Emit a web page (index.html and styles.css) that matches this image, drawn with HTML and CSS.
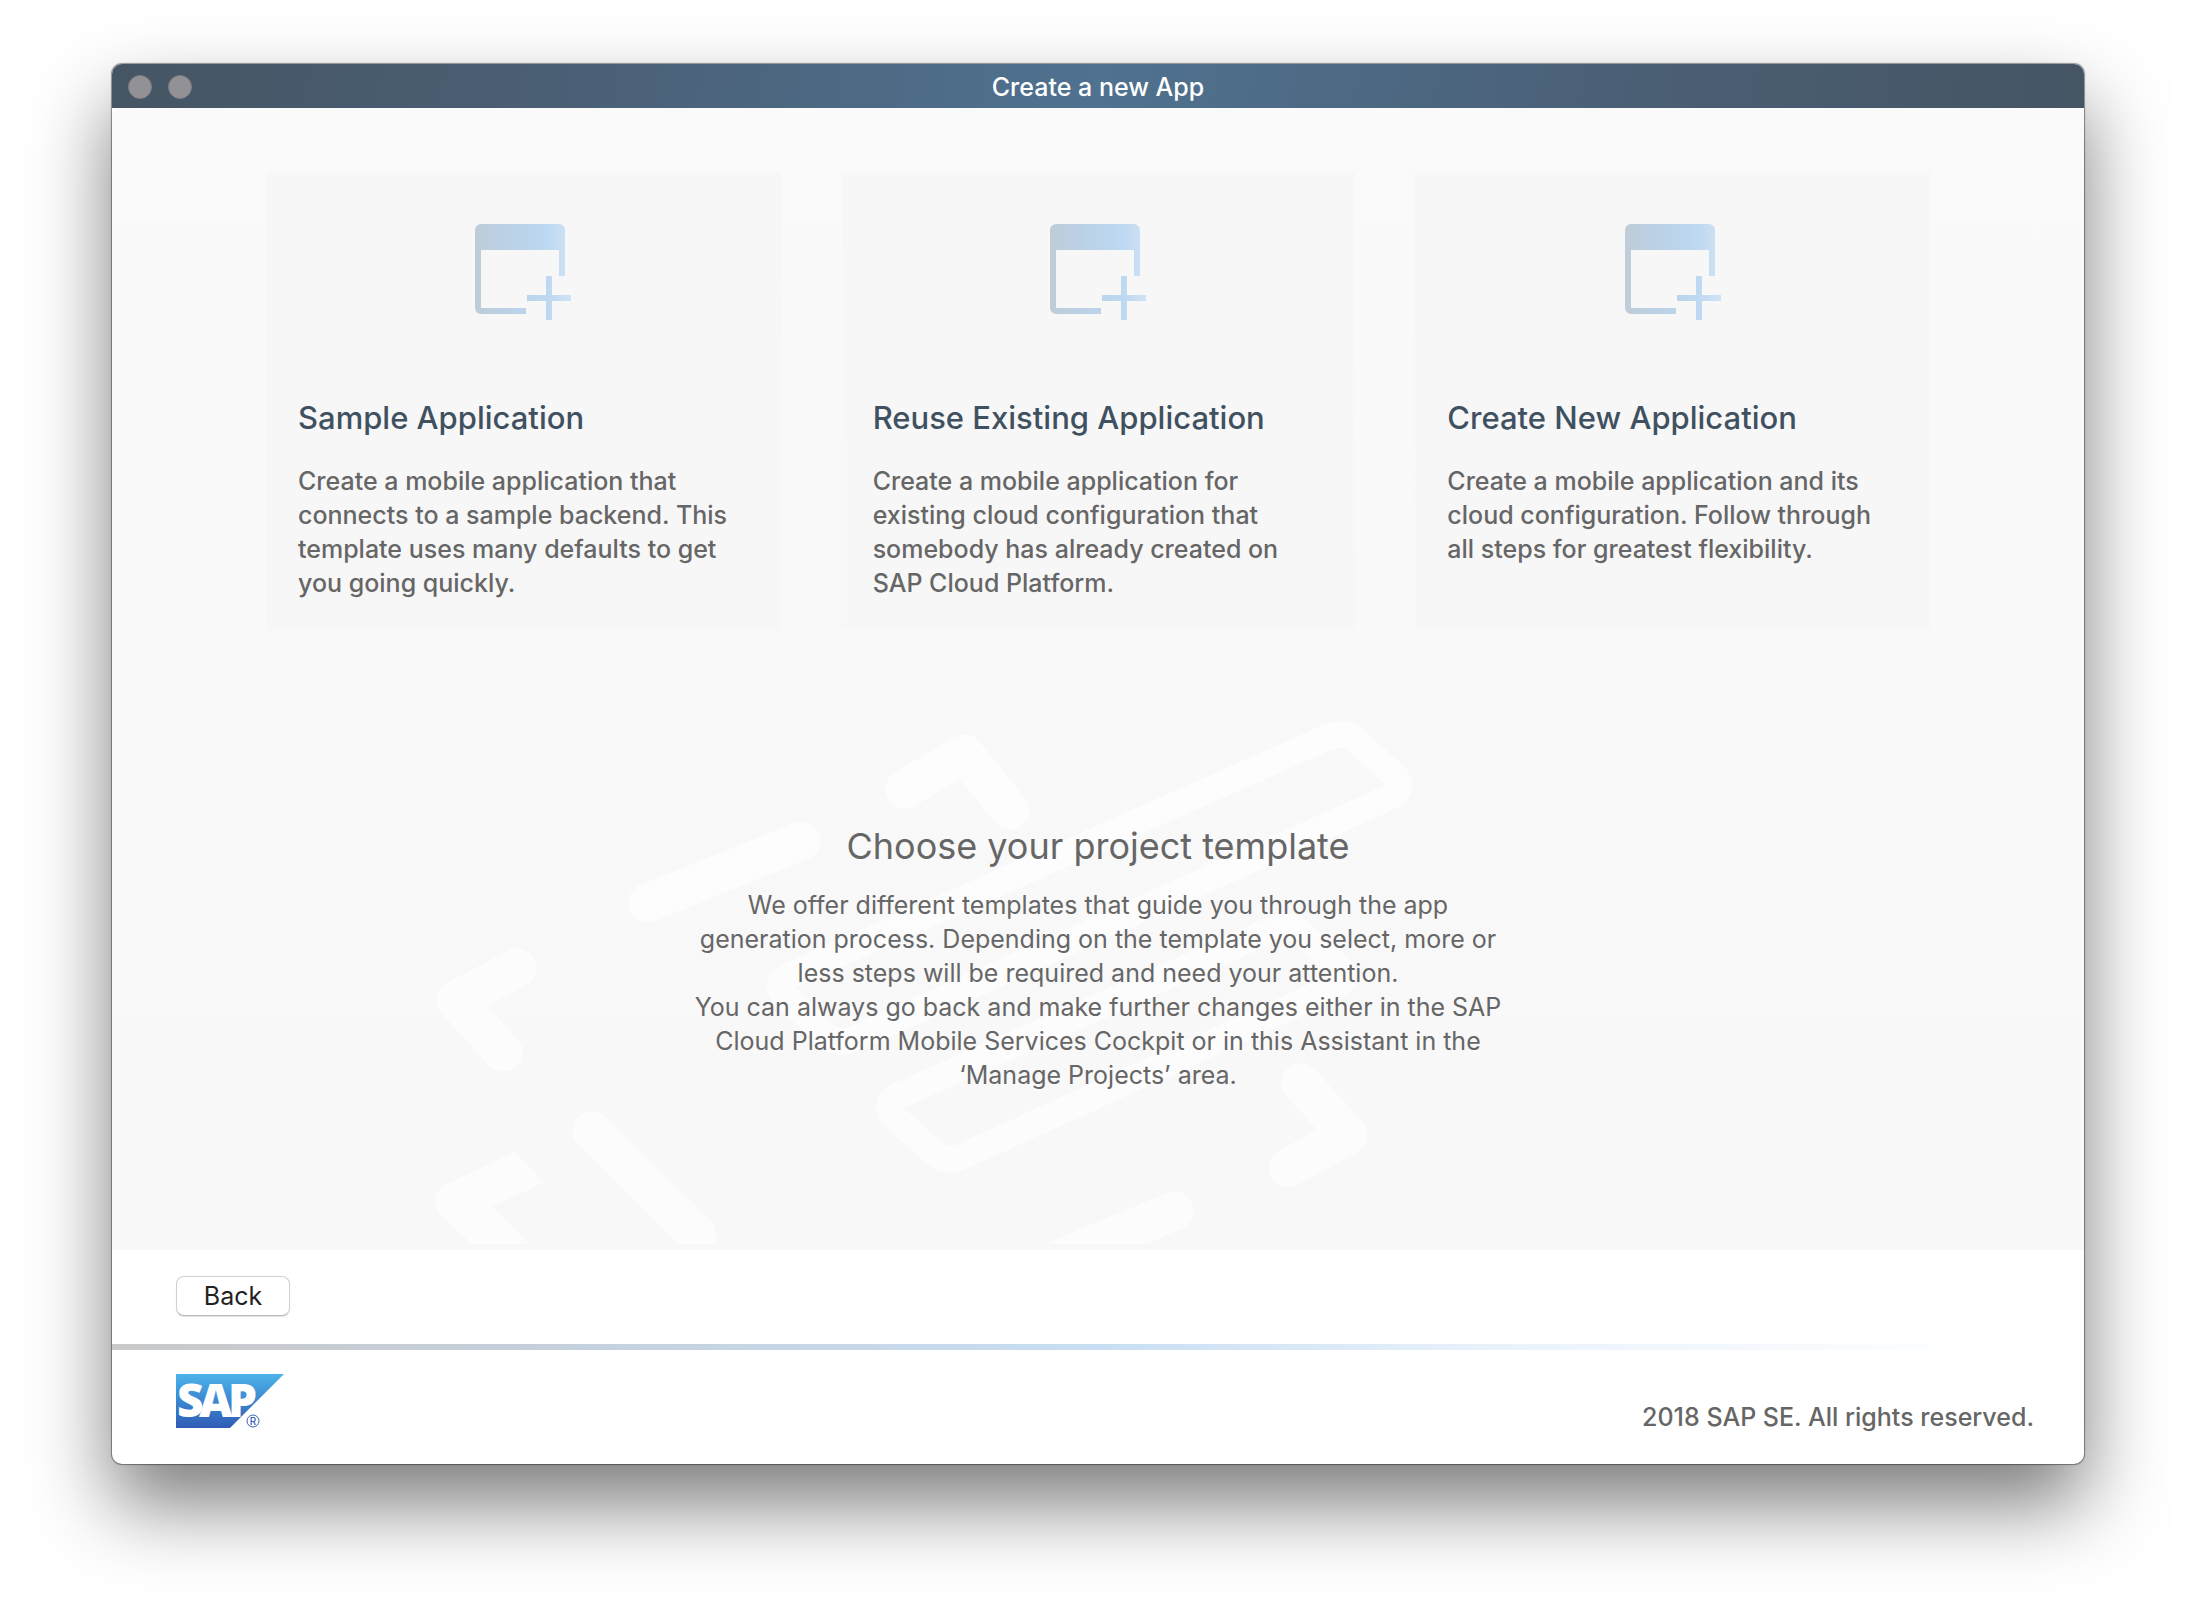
FILE: index.html
```html
<!DOCTYPE html>
<html lang="en">
<head>
  <meta charset="utf-8">
  <meta name="viewport" content="width=device-width, initial-scale=1">
  <title>Create a new App</title>
  <link rel="stylesheet" href="styles.css">
</head>
<body>
  <!-- Shared icon and its gradient -->
  <svg class="defs" aria-hidden="true">
    <defs>
      <linearGradient id="icon-fill" gradientUnits="userSpaceOnUse" x1="0" y1="0" x2="96" y2="0">
        <stop offset="0" stop-color="#bfccd8"/>
        <stop offset="0.35" stop-color="#bbd1e6"/>
        <stop offset="0.75" stop-color="#bdd8f1"/>
        <stop offset="1" stop-color="#d0e3f5"/>
      </linearGradient>
      <symbol id="icon-new-app" viewBox="0 0 96 96">
        <path fill="url(#icon-fill)" d="M6 0H84a6 6 0 0 1 6 6V52H84V26H6V84H51V90H6a6 6 0 0 1-6-6V6a6 6 0 0 1 6-6ZM71 52h6v19h19v6H77v19h-6V77H52v-6h19Z"/>
      </symbol>
    </defs>
  </svg>

  <div class="window">
    <header class="titlebar">
      <div class="controls">
        <span class="control"></span>
        <span class="control"></span>
      </div>
      <h1 class="title">Create a new App</h1>
    </header>

    <div class="panel">
      <main class="content">
        <svg class="watermark" viewBox="430 714 1000 530" width="1000" height="530" fill="none" stroke="#fff" stroke-linecap="round" stroke-linejoin="round" aria-hidden="true">
          <g stroke-width="39">
            <path d="M648 903 801 841"/>
            <path d="M517 968 456 1000 503 1052"/>
            <path d="M592 1131 697 1235"/>
            <path d="M905 789 964 754 1010 810"/>
            <path d="M1301 1083 1348 1135 1288 1168"/>
            <path d="M1174 1211 1006 1281"/>
          </g>
          <path stroke="none" fill="#fff" d="M515 1152 544 1182 492 1207 529 1244H472L442 1217A20 20 0 0 1 449 1183Z"/>
          <g stroke-width="26">
            <path d="M1326 738Q1345 730 1357 741L1395 776Q1406 789 1390 797L854 1039Q838 1046 826 1035L785 996Q773 984 789 976Z"/>
            <path d="M1271 930Q1289 922 1301 933L1340 968Q1350 980 1332 988L963 1156Q945 1164 933 1152L893 1116Q882 1103 900 1095Z"/>
          </g>
        </svg>

        <section class="cards" aria-label="Project templates">
          <article class="card">
            <svg class="card-icon" aria-hidden="true"><use href="#icon-new-app"/></svg>
            <h2 class="card-title">Sample Application</h2>
            <p class="card-text">Create a mobile application that connects to a sample backend. This template uses many defaults to get you going quickly.</p>
          </article>
          <article class="card">
            <svg class="card-icon" aria-hidden="true"><use href="#icon-new-app"/></svg>
            <h2 class="card-title">Reuse Existing Application</h2>
            <p class="card-text">Create a mobile application for existing cloud configuration that somebody has already created on SAP Cloud Platform.</p>
          </article>
          <article class="card">
            <svg class="card-icon" aria-hidden="true"><use href="#icon-new-app"/></svg>
            <h2 class="card-title">Create New Application</h2>
            <p class="card-text">Create a mobile application and its cloud configuration. Follow through all steps for greatest flexibility.</p>
          </article>
        </section>

        <section class="intro">
          <h2 class="intro-title">Choose your project template</h2>
          <p class="intro-text">We offer different templates that guide you through the app generation process. Depending on the template you select, more or less steps will be required and need your attention.<br>You can always go back and make further changes either in the SAP Cloud Platform Mobile Services Cockpit or in this Assistant in the ‘Manage Projects’ area.</p>
        </section>
      </main>

      <div class="actions">
        <button class="back" type="button">Back</button>
      </div>
    </div>

    <footer class="footer">
      <svg class="logo" viewBox="0 0 108 54" width="108" height="54" role="img" aria-label="SAP">
        <defs>
          <linearGradient id="logo-fill" x1="0" y1="0" x2="0" y2="1">
            <stop offset="0" stop-color="#4db3ea"/>
            <stop offset="0.5" stop-color="#3b87d0"/>
            <stop offset="1" stop-color="#2f5bb5"/>
          </linearGradient>
        </defs>
        <path fill="url(#logo-fill)" d="M0 0H108L54 54H0Z"/>
        <text class="logo-name" x="1 23 52" y="43">SAP</text>
        <circle cx="77" cy="47" r="6" fill="none" stroke="#3a62b8"/>
        <text class="logo-mark" x="77" y="51">R</text>
      </svg>
      <p class="copyright">2018 SAP SE. All rights reserved.</p>
    </footer>
  </div>
</body>
</html>
```
FILE: styles.css
```css
* {
  box-sizing: border-box;
}

body {
  margin: 0;
  padding: 64px 112px 160px;
  background: #fff;
  color: #666;
  font: 400 25px/34px Inter, "Liberation Sans", sans-serif;
}

h1,
h2,
p {
  margin: 0;
}

.defs {
  position: absolute;
  width: 0;
  height: 0;
}

/* Window frame */
.window {
  display: flex;
  flex-direction: column;
  min-height: calc(100vh - 224px);
  border-radius: 10px;
  background: #fff;
  box-shadow: 0 0 1px 1px rgba(0, 0, 0, 0.4), 0 40px 80px rgba(0, 0, 0, 0.52);
  overflow: hidden;
}

.titlebar {
  display: grid;
  grid-template-columns: 1fr auto 1fr;
  align-items: center;
  height: 44px;
  padding: 2px 16px 0;
  background: linear-gradient(100deg, #455564, #4a5d72 20%, #4f7290 50%, #4a5d72 80%, #455564);
}

.controls {
  display: flex;
  gap: 16px;
}

.control {
  width: 24px;
  height: 24px;
  border: 1px solid #7d7c82;
  border-radius: 50%;
  background: #929196;
}

.title {
  color: #fff;
  font-size: 25px;
  font-weight: 500;
}

.panel {
  display: flex;
  flex: 1;
  flex-direction: column;
  border-radius: 8px;
  overflow: hidden;
}

/* Template choice */
.content {
  position: relative;
  flex: 1;
  padding: 64px 154px;
  background: linear-gradient(#fafafa, #f8f8f8);
}

.watermark {
  position: absolute;
  bottom: 6px;
  left: calc(50% - 668px);
  opacity: 0.7;
}

.cards {
  position: relative;
  display: grid;
  grid-template-columns: repeat(3, 1fr);
  gap: 60px;
}

.card {
  padding: 52px 32px 30px;
  background: #f7f7f7;
}

.card-icon {
  display: block;
  width: 96px;
  height: 96px;
  margin: 0 auto 78px;
}

.card-title {
  color: #3f5161;
  font-size: 31px;
  font-weight: 500;
  line-height: 40px;
}

.card-text {
  margin-top: 26px;
  font-weight: 500;
}

.intro {
  position: relative;
  max-width: 830px;
  margin: 192px auto 0;
  text-align: center;
}

.intro-title {
  font-size: 36px;
  font-weight: 400;
  line-height: 48px;
}

.intro-text {
  margin-top: 18px;
}

/* Bottom bars */
.actions {
  padding: 26px 64px 28px;
  background: #fff;
}

.back {
  display: block;
  width: 114px;
  height: 40px;
  padding: 0;
  border: 1px solid #d0d0d0;
  border-bottom-color: #b8b8b8;
  border-radius: 8px;
  background: #fff;
  box-shadow: 0 1px 1px rgba(0, 0, 0, 0.12);
  color: #222;
  font: inherit;
}

.footer {
  display: flex;
  align-items: flex-end;
  justify-content: space-between;
  height: 120px;
  padding: 24px 50px 30px 64px;
  border-top: 6px solid;
  border-image: linear-gradient(90deg, #c9c9c9, #c5d0dc 22%, #c8def2 50%, #e9f2fb 70%, #fff 95%) 1;
}

.logo {
  align-self: flex-start;
  overflow: visible;
}

.logo-name {
  fill: #fff;
  font: 800 46px "Open Sans", sans-serif;
}

.logo-mark {
  fill: #3a62b8;
  font: 500 10px Inter, sans-serif;
  text-anchor: middle;
}

.copyright {
  font-weight: 500;
}
```
